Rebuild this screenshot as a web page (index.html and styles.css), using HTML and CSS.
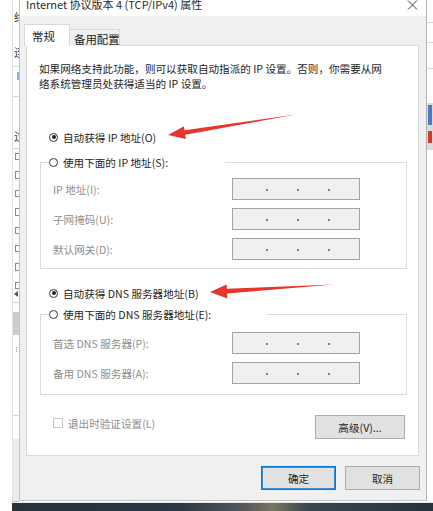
FILE: index.html
```html
<!DOCTYPE html>
<html lang="zh-CN">
<head>
<meta charset="utf-8">
<title>Internet 协议版本 4 (TCP/IPv4) 属性</title>
<link rel="stylesheet" href="styles.css">
</head>
<body>
<div class="screen">
  <div class="desk">
    <div class="bg-left">
      <div class="lblank"></div>
      <div class="lcol">
        <div class="lg lg1">络</div>
        <div class="lg lg2">连</div>
        <div class="lline ll1"></div>
        <div class="lblue"></div>
        <div class="lline ll2"></div>
        <div class="lg lg3">过</div>
        <div class="lline ll3"></div>
        <div class="licons">
          <span class="lic"></span><span class="lic"></span><span class="lic"></span><span class="lic"></span>
          <span class="lic"></span><span class="lic"></span><span class="lic"></span><span class="lic"></span>
        </div>
        <div class="ltri"></div>
        <div class="lline ll4"></div>
        <div class="lthumb"></div>
        <div class="ldots"></div>
        <div class="lline ll5"></div>
        <div class="lgrey"></div>
      </div>
    </div>

    <div class="dialog">
      <div class="titlebar">
        <span class="title">Internet 协议版本 4 (TCP/IPv4) 属性</span>
        <svg class="close" width="11" height="10" viewBox="0 0 11 10"><path d="M1 0.5 L10 9.5 M10 0.5 L1 9.5" stroke="#3a3a3a" stroke-width="1" fill="none"/></svg>
      </div>
      <div class="body">
        <div class="tabs">
          <div class="tab active">常规</div>
          <div class="tab">备用配置</div>
        </div>
        <div class="panel">
          <p class="desc">如果网络支持此功能，则可以获取自动指派的 IP 设置。否则，你需要从网<br>络系统管理员处获得适当的 IP 设置。</p>

          <div class="radio-row r1"><span class="radio on"></span><span>自动获得 IP 地址(O)</span></div>

          <fieldset class="group g1">
            <legend class="lg-ip"><span class="radio"></span><span>使用下面的 IP 地址(S):</span></legend>
            <div class="field"><span class="flabel">IP 地址(I):</span><span class="ipbox"><i></i><i></i><i></i></span></div>
            <div class="field"><span class="flabel">子网掩码(U):</span><span class="ipbox"><i></i><i></i><i></i></span></div>
            <div class="field"><span class="flabel">默认网关(D):</span><span class="ipbox"><i></i><i></i><i></i></span></div>
          </fieldset>

          <div class="radio-row r3"><span class="radio on"></span><span>自动获得 DNS 服务器地址(B)</span></div>

          <fieldset class="group g2">
            <legend class="lg-dns"><span class="radio"></span><span>使用下面的 DNS 服务器地址(E):</span></legend>
            <div class="field"><span class="flabel">首选 DNS 服务器(P):</span><span class="ipbox"><i></i><i></i><i></i></span></div>
            <div class="field"><span class="flabel">备用 DNS 服务器(A):</span><span class="ipbox"><i></i><i></i><i></i></span></div>
          </fieldset>

          <div class="check-row">
            <label class="check"><span class="cbox"></span><span>退出时验证设置(L)</span></label>
            <button class="btn adv">高级(V)...</button>
          </div>
        </div>
        <div class="actions">
          <button class="btn ok">确定</button>
          <button class="btn">取消</button>
        </div>
      </div>
    </div>

    <div class="bg-right">
      <div class="rline rl1"></div>
      <div class="rline rl2"></div>
      <div class="rline rl3"></div>
      <div class="rblock"><span class="rblue"></span><span class="rred"></span></div>
    </div>
  </div>
  <div class="taskbar-row">
    <div class="tb-blank"></div>
    <div class="taskbar"></div>
  </div>

  <svg class="arrows" width="433" height="511" viewBox="0 0 433 511">
    <polygon points="168,135 184,126.2 184.5,130.2 296,114.6 185.2,134.8 185.9,139" fill="#e5352c"/>
    <polygon points="210,292 226.7,284.6 226.9,288.7 334,284.6 227.1,293.6 227.3,298.4" fill="#e5352c"/>
  </svg>
</div>
</body>
</html>
```

FILE: styles.css
```css
* { box-sizing: border-box; }
html, body { margin: 0; padding: 0; background: #ffffff; }

.screen {
  position: relative;
  width: 433px;
  height: 511px;
  overflow: hidden;
  font-family: "Noto Sans CJK SC", "Noto Sans", sans-serif;
  font-size: 10.6px;
  color: #1e1e1e;
  background: #ffffff;
}

.desk {
  display: flex;
  height: 502px;
}

/* ---------- background window on the left ---------- */
.bg-left {
  width: 19px;
  flex: none;
  display: flex;
  background: #fff;
}
.lblank { width: 12px; flex: none; }
.lcol {
  width: 7px;
  border-left: 1px solid #e2e2e2;
  overflow: hidden;
  display: flex;
  flex-direction: column;
}
.lg {
  font-size: 11px;
  line-height: 12px;
  height: 12px;
  width: 12px;
  color: #333;
  margin-left: 1px;
}
.lg1 { margin-top: 11px; }
.lg2 { margin-top: 23px; }
.lline { height: 1px; background: #d6d6d6; flex: none; }
.ll1 { margin-top: 8px; }
.lblue { width: 2px; height: 8px; background: #8fb0de; margin: 5px 0 0 4px; }
.ll2 { margin-top: 16px; }
.lg3 { margin-top: 33px; }
.ll3 { margin-top: 6px; }
.licons { display: flex; flex-direction: column; gap: 11px; margin-top: 4px; }
.lic { display: block; width: 7px; height: 7.4px; border: 1px solid #8a8a8a; border-right: none; margin-left: 2px; }
.ltri {
  width: 0; height: 0;
  border-top: 3px solid transparent;
  border-bottom: 3px solid transparent;
  border-right: 4px solid #555;
  margin: 2px 0 0 1px;
}
.ll4 { margin-top: 5px; }
.lthumb { height: 23px; background: #cdcdcd; margin-top: 9px; width: 6px; }
.ldots { width: 1px; height: 5px; border-left: 1px dotted #999; margin: 12px 0 0 3px; }
.ll5 { margin-top: 63px; }
.lgrey { flex: 1; background: #ececec; margin-top: 23px; border-bottom: 1px solid #c9c9c9; }

/* ---------- dialog ---------- */
.dialog {
  width: 408px;
  flex: none;
  height: 501px;
  background: #f0f0f0;
  border-left: 1px solid #c3c3c3;
  border-right: 1px solid #b4b4b4;
  border-bottom: 1px solid #c4c4c4;
  display: flex;
  flex-direction: column;
}
.titlebar {
  height: 16px;
  background: #ffffff;
  display: flex;
  justify-content: space-between;
  align-items: flex-start;
  padding: 0 8px 0 6px;
}
.title {
  font-size: 11px;
  line-height: 9px;
  color: #2b2b2b;
  white-space: nowrap;
}

.body {
  padding: 8px 7px 0 6px;
  display: flex;
  flex-direction: column;
}

.tabs {
  display: flex;
  align-items: flex-end;
  margin-bottom: -1px;
  position: relative;
  z-index: 2;
  height: 22px;
}
.tab {
  font-size: 11.4px;
  line-height: 14px;
  border: 1px solid #d9d9d9;
  border-bottom: none;
  white-space: nowrap;
}
.tab.active {
  background: #fff;
  width: 46px;
  height: 22px;
  margin-left: -2px;
  padding: 4px 0 0 7px;
}
.tab:not(.active) {
  background: #f0f0f0;
  width: 50px;
  height: 17px;
  border-left: none;
  padding: 2px 0 0 4px;
}

.panel {
  height: 411px;
  background: #ffffff;
  border: 1px solid #d9d9d9;
  padding: 0 11px 0 13px;
  display: flex;
  flex-direction: column;
}
.desc {
  margin: 0 0 0 -1px;
  padding: 15px 0 0 0;
  line-height: 15px;
  white-space: nowrap;
  color: #1e1e1e;
}

.radio-row {
  display: flex;
  align-items: center;
  gap: 5px;
  height: 16px;
  padding-left: 9px;
  white-space: nowrap;
}
.r1 { margin-top: 38px; }
.r3 { margin-top: 16px; }

.radio {
  width: 9px;
  height: 9px;
  border: 1px solid #333;
  border-radius: 50%;
  flex: none;
  display: flex;
  align-items: center;
  justify-content: center;
  background: #fff;
}
.radio.on::after {
  content: "";
  width: 4px;
  height: 4px;
  border-radius: 50%;
  background: #222;
}

.group {
  margin: 0;
  border: 1px solid #dcdcdc;
  padding: 8px 0 8px 8px;
  display: flex;
  flex-direction: column;
  gap: 8px;
  min-width: 0;
}
.g1 { margin-top: 9px; }
.g2 { margin-top: 5px; padding-top: 10px; padding-bottom: 10px; }
.group legend {
  padding: 0;
  height: 16px;
  display: flex;
  align-items: center;
  gap: 5px;
  white-space: nowrap;
  background: #fff;
}
.lg-ip { width: 176px; }
.lg-dns { width: 218px; }

.field {
  display: flex;
  align-items: center;
  height: 22px;
  padding-left: 4px;
}
.flabel {
  width: 179px;
  flex: none;
  color: #8e8e8e;
  white-space: nowrap;
}
.ipbox {
  width: 128px;
  height: 22px;
  border: 1px solid #a3a3a3;
  background: #f0f0f0;
  display: flex;
  align-items: center;
  padding-left: 33px;
  gap: 29px;
}
.ipbox i {
  display: block;
  width: 2px;
  height: 2px;
  background: #7d7d7d;
  margin-top: 2px;
}

.check-row {
  display: flex;
  justify-content: space-between;
  align-items: flex-start;
  margin-top: 21px;
  padding: 0 0 0 13px;
  margin-right: 2px;
}
.check {
  display: flex;
  align-items: center;
  gap: 5px;
  color: #8e8e8e;
  white-space: nowrap;
  height: 14px;
}
.cbox {
  width: 10px;
  height: 10px;
  border: 1px solid #c6c6c6;
  background: #fff;
}

.btn {
  font: inherit;
  color: #1e1e1e;
  background: #e1e1e1;
  border: 1px solid #adadad;
  height: 24px;
  padding: 0;
  margin: 0;
  border-radius: 0;
}
.adv { width: 90px; margin-top: -1px; }

.actions {
  display: flex;
  justify-content: flex-end;
  gap: 9px;
  margin-top: 10px;
  margin-right: -1px;
}
.actions .btn { width: 75px; }
.btn.ok {
  border: 1px solid #0078d7;
  box-shadow: inset 0 0 0 1px #3d8fd6;
}

/* ---------- background window on the right ---------- */
.bg-right {
  flex: 1;
  background: #fff;
  display: flex;
  flex-direction: column;
}
.rline { height: 1px; background: #d4d4d4; }
.rl1 { margin-top: 22px; }
.rl2 { margin-top: 19px; }
.rl3 { margin-top: 25px; }
.rblock {
  margin-top: 34px;
  height: 47px;
  background: #dcdcdc;
  display: flex;
  flex-direction: column;
  padding: 2px 0 0 1px;
  gap: 6px;
}
.rblue { display: block; width: 4px; height: 20px; background: #4f79c6; }
.rred { display: block; width: 4px; height: 12px; background: #d23b30; }

/* ---------- taskbar ---------- */
.taskbar-row {
  display: flex;
  height: 9px;
}
.tb-blank { width: 12px; background: #fff; }
.taskbar {
  flex: 1;
  border-top: 1px solid #e6e6e6;
  background: linear-gradient(90deg, #26323c 0%, #2b3843 40%, #54585a 55%, #7a7560 62%, #3a4650 70%, #26333d 100%);
}

/* ---------- annotation arrows (drawn over the dialog) ---------- */
.arrows {
  position: absolute;
  left: 0;
  top: 0;
  pointer-events: none;
}
```
